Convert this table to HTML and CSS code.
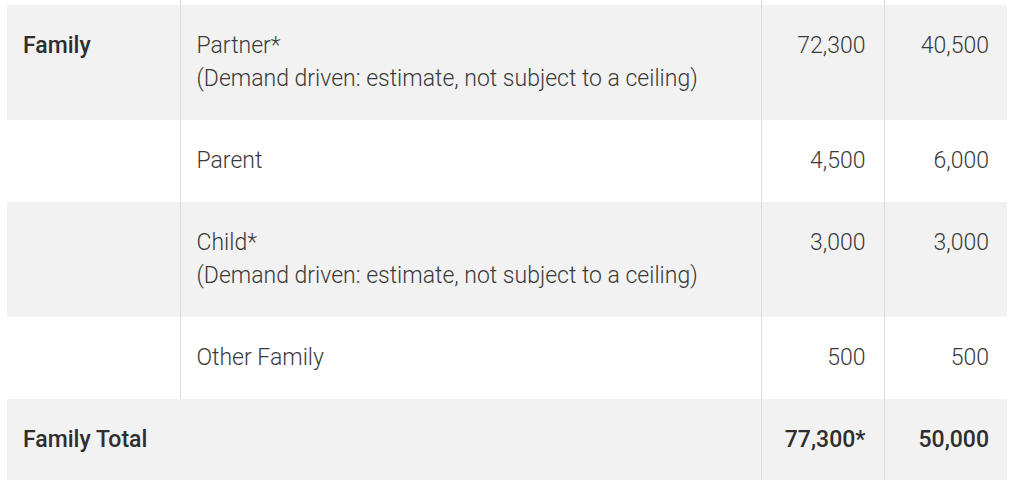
FILE: index.html
```html
<!DOCTYPE html>
<html lang="en">
<head>
<meta charset="utf-8">
<title>Family</title>
<link rel="stylesheet" href="styles.css">
</head>
<body>
<div class="wrap">
<table class="quota">
  <colgroup>
    <col class="c1"><col class="c2"><col class="c3"><col class="c4">
  </colgroup>
  <tbody>
    <tr class="lead"><th></th><td></td><td></td><td></td></tr>
    <tr class="odd">
      <th>Family</th>
      <td>Partner*<br>(Demand driven: estimate, not subject to a ceiling)</td>
      <td class="num">72,300</td>
      <td class="num">40,500</td>
    </tr>
    <tr>
      <th></th>
      <td>Parent</td>
      <td class="num">4,500</td>
      <td class="num">6,000</td>
    </tr>
    <tr class="odd">
      <th></th>
      <td>Child*<br>(Demand driven: estimate, not subject to a ceiling)</td>
      <td class="num">3,000</td>
      <td class="num">3,000</td>
    </tr>
    <tr>
      <th></th>
      <td>Other Family</td>
      <td class="num">500</td>
      <td class="num">500</td>
    </tr>
    <tr class="odd total">
      <th colspan="2">Family Total</th>
      <td class="num">77,300*</td>
      <td class="num">50,000</td>
    </tr>
  </tbody>
</table>
</div>
</body>
</html>
```
FILE: styles.css
```css
html, body {
  margin: 0;
  padding: 0;
  background: #fff;
}
.wrap {
  padding: 0 5px 0 7px;
}
.quota {
  border-collapse: collapse;
  table-layout: fixed;
  width: 1000px;
  font-family: Roboto, "Liberation Sans", Arial, sans-serif;
  font-size: 23px;
  line-height: 33px;
  color: #3a3a3a;
}
.c1 { width: 173px; }
.c2 { width: 581px; }
.c3 { width: 123px; }
.c4 { width: 123px; }
.quota th,
.quota td {
  padding: 24px 18px 25px 16px;
  text-align: left;
  vertical-align: top;
  font-weight: 300;
}
.quota th {
  font-weight: 500;
  color: #2e2e2e;
}
.quota td {
  border-left: 1px solid #dcdcdc;
}
.quota .num {
  text-align: right;
}
.quota tr.odd {
  background: #f2f2f2;
}
.quota tr.lead th,
.quota tr.lead td {
  padding: 0;
  height: 5px;
}
.quota tr.total td {
  font-weight: 500;
  color: #2e2e2e;
}
```
